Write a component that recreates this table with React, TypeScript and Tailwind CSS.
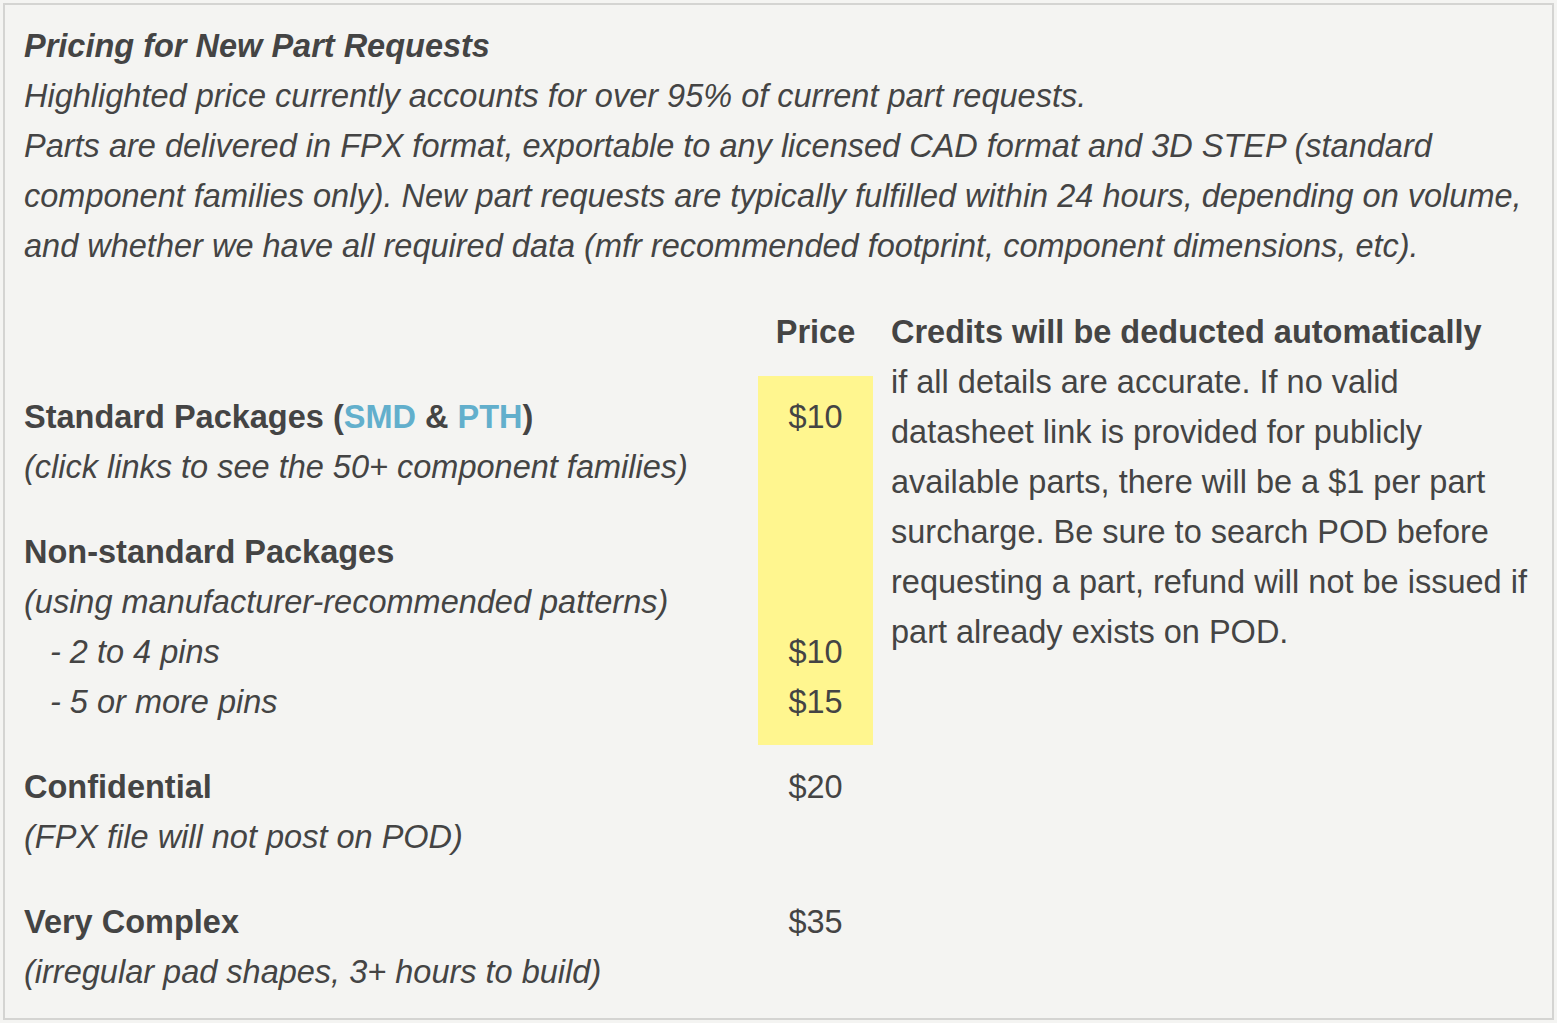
const ink = "text-[#444]";

export default function App() {
  return (
    <div className="min-h-[1023px] w-[1557px] bg-[#f4f4f2] p-[3px]">
      <div
        className={`h-[1017px] border-2 border-[#d4d4d2] bg-[#f4f4f2] px-[19px] pt-[16px] ${ink} text-[32.5px] leading-[50px]`}
        style={{ fontFamily: '"Liberation Sans", Arial, sans-serif' }}
      >
        <div className="italic whitespace-nowrap">
          <div className="font-bold">Pricing for New Part Requests</div>
          <div>Highlighted price currently accounts for over 95% of current part requests.</div>
          <div>
            Parts are delivered in FPX format, exportable to any licensed CAD format and 3D STEP (standard
            <br />
            component families only). New part requests are typically fulfilled within 24 hours, depending on volume,
            <br />
            and whether we have all required data (mfr recommended footprint, component dimensions, etc).
          </div>
        </div>

        <table className="mt-[19px] border-collapse">
          <tbody>
            <tr>
              <td className="w-[734px] pt-[17px] pb-[19px]"></td>
              <td className="w-[115px] text-center font-bold align-top pt-[17px] pb-[19px]">Price</td>
              <td rowSpan={5} className="align-top pl-[18px] pt-[17px] whitespace-nowrap">
                <div className="font-bold">Credits will be deducted automatically</div>
                <div>if all details are accurate. If no valid</div>
                <div>datasheet link is provided for publicly</div>
                <div>available parts, there will be a $1 per part</div>
                <div>surcharge. Be sure to search POD before</div>
                <div>requesting a part, refund will not be issued if</div>
                <div>part already exists on POD.</div>
              </td>
            </tr>
            <tr>
              <td className="align-top pt-[16px] pb-[19px]">
                <div className="font-bold">
                  Standard Packages (<a className="text-[#62afcc]">SMD</a> &amp;{" "}
                  <a className="text-[#62afcc]">PTH</a>)
                </div>
                <div className="italic">(click links to see the 50+ component families)</div>
              </td>
              <td className="align-top text-center bg-[#fff68f] pt-[16px] pb-[19px]">$10</td>
            </tr>
            <tr>
              <td className="align-top pt-[16px] pb-[18px]">
                <div className="font-bold">Non-standard Packages</div>
                <div className="italic">(using manufacturer-recommended patterns)</div>
                <div className="italic pl-[26px]">- 2 to 4 pins</div>
                <div className="italic pl-[26px]">- 5 or more pins</div>
              </td>
              <td className="align-top text-center bg-[#fff68f] pt-[16px] pb-[18px]">
                <div>&nbsp;</div>
                <div>&nbsp;</div>
                <div>$10</div>
                <div>$15</div>
              </td>
            </tr>
            <tr>
              <td className="align-top pt-[17px] pb-[18px]">
                <div className="font-bold">Confidential</div>
                <div className="italic">(FPX file will not post on POD)</div>
              </td>
              <td className="align-top text-center pt-[17px] pb-[18px]">$20</td>
            </tr>
            <tr>
              <td className="align-top pt-[17px] pb-[18px]">
                <div className="font-bold">Very Complex</div>
                <div className="italic">(irregular pad shapes, 3+ hours to build)</div>
              </td>
              <td className="align-top text-center pt-[17px] pb-[18px]">$35</td>
            </tr>
          </tbody>
        </table>
      </div>
    </div>
  );
}
